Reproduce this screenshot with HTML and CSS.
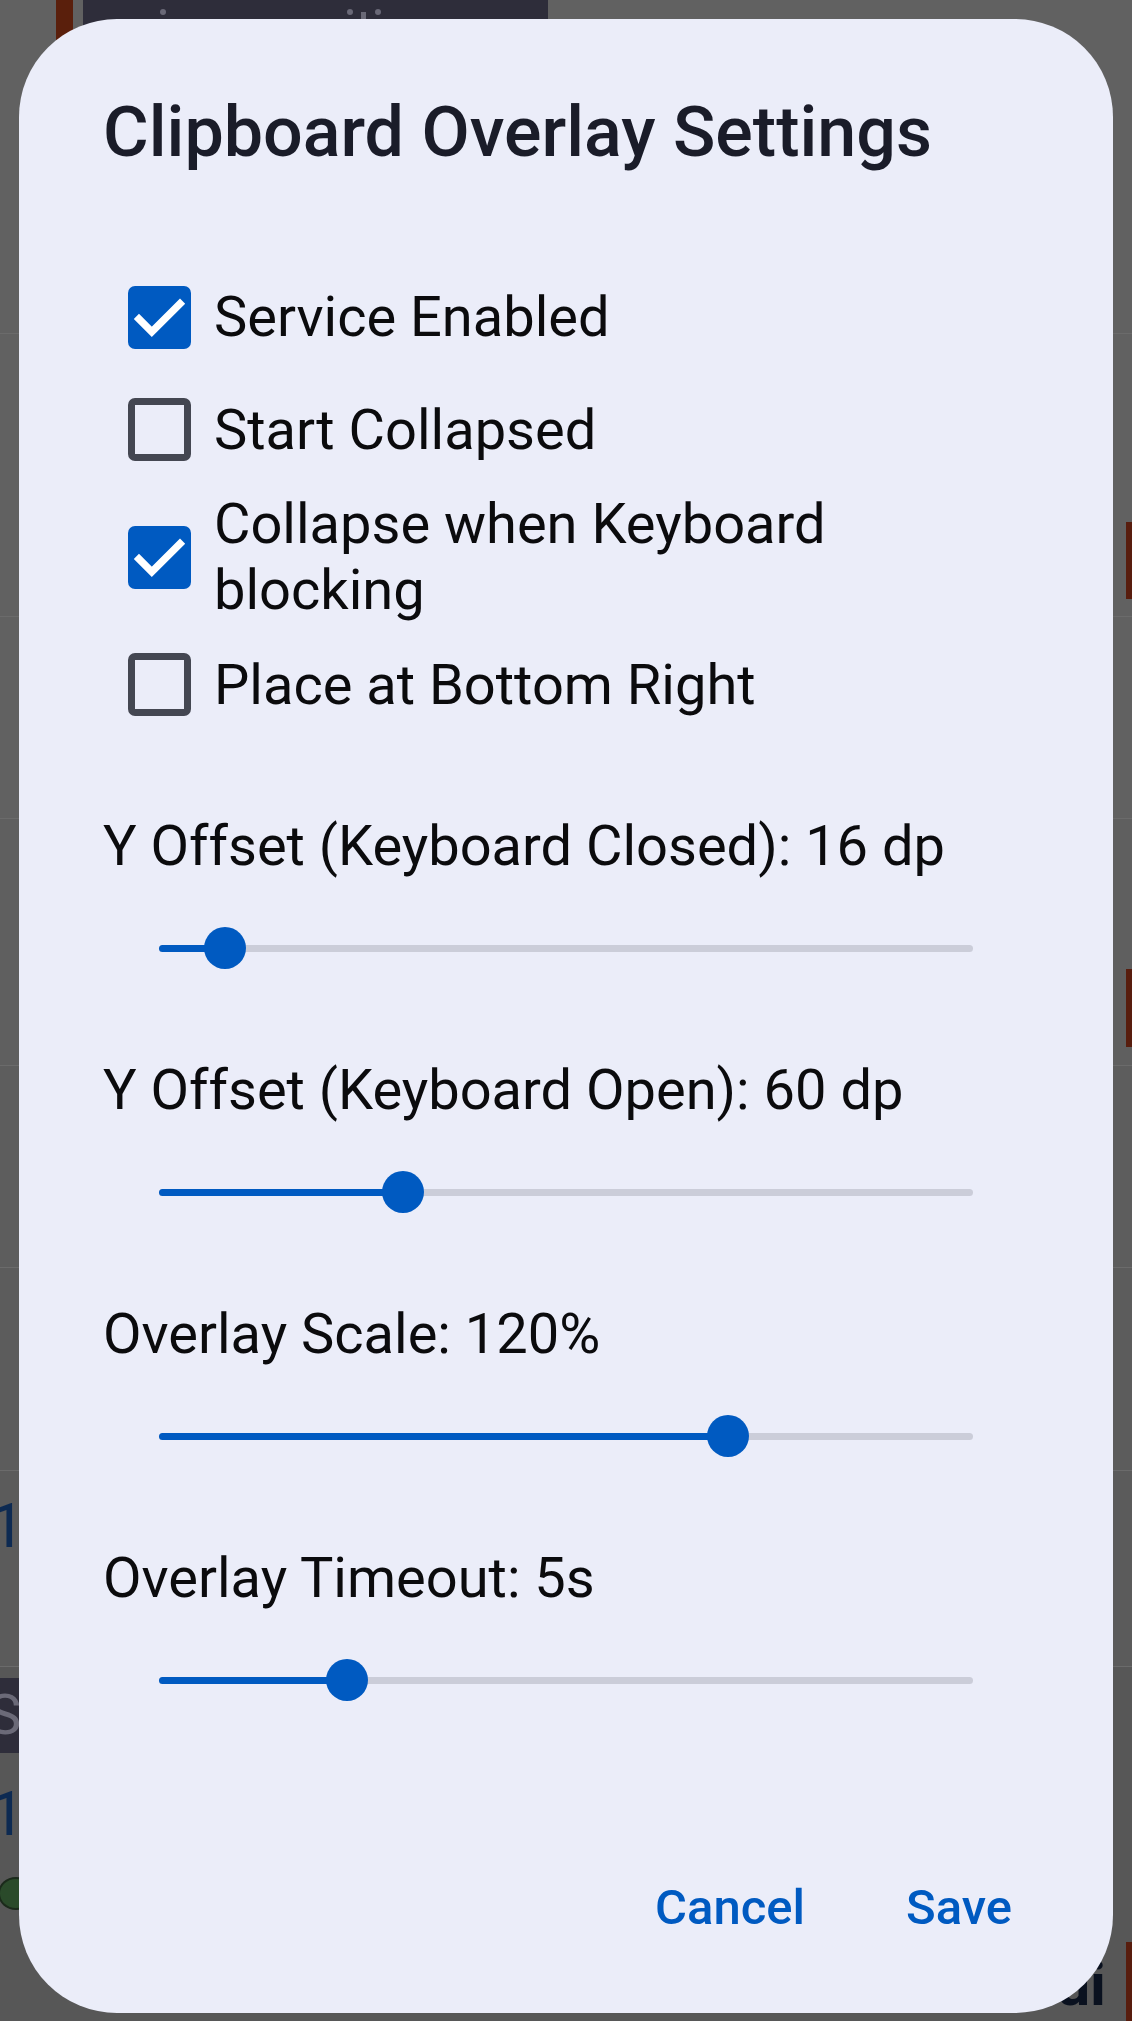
FILE: index.html
```html
<!DOCTYPE html>
<html lang="en">
<head>
<meta charset="utf-8">
<title>Clipboard Overlay Settings</title>
<link rel="stylesheet" href="styles.css">
</head>
<body>
<div class="app">
  <div class="row r1">
    <div class="accent"></div>
    <div class="topbox"><i class="dot d1"></i><i class="dot d2"></i><i class="tick"></i><i class="dot d3"></i></div>
  </div>
  <div class="row r2"><div class="redtag t2"></div></div>
  <div class="row r3"></div>
  <div class="row r4"><div class="redtag t4"></div></div>
  <div class="row r5"></div>
  <div class="row r6"></div>
  <div class="row r7"><span class="num">1</span></div>
  <div class="row r8">
    <div class="leftcol">
      <div class="sbox"><span>S</span></div>
      <span class="num n2">1</span>
      <span class="status"></span>
    </div>
    <div class="rightcol">
      <span class="ui">ui</span>
      <div class="redtag t8"></div>
    </div>
  </div>
</div>

<div class="dialog">
  <h1 class="title">Clipboard Overlay Settings</h1>

  <div class="checks">
    <div class="check-row">
      <span class="box on"><svg viewBox="0 0 18 18" width="63" height="63"><polyline points="2.4,8.7 6.8,13.1 15.6,4.3" fill="none" stroke="#ffffff" stroke-width="2.1"/></svg></span>
      <span class="check-text">Service Enabled</span>
    </div>
    <div class="check-row">
      <span class="box"></span>
      <span class="check-text">Start Collapsed</span>
    </div>
    <div class="check-row">
      <span class="box on"><svg viewBox="0 0 18 18" width="63" height="63"><polyline points="2.4,8.7 6.8,13.1 15.6,4.3" fill="none" stroke="#ffffff" stroke-width="2.1"/></svg></span>
      <span class="check-text">Collapse when Keyboard blocking</span>
    </div>
    <div class="check-row">
      <span class="box"></span>
      <span class="check-text">Place at Bottom Right</span>
    </div>
  </div>

  <div class="sliders">
    <div class="slider-block">
      <div class="slider-label">Y Offset (Keyboard Closed): 16 dp</div>
      <div class="slider"><div class="track"><div class="fill" style="width:66px"></div><div class="thumb" style="left:45px"></div></div></div>
    </div>
    <div class="slider-block">
      <div class="slider-label">Y Offset (Keyboard Open): 60 dp</div>
      <div class="slider"><div class="track"><div class="fill" style="width:244px"></div><div class="thumb" style="left:223px"></div></div></div>
    </div>
    <div class="slider-block">
      <div class="slider-label">Overlay Scale: 120%</div>
      <div class="slider"><div class="track"><div class="fill" style="width:569px"></div><div class="thumb" style="left:548px"></div></div></div>
    </div>
    <div class="slider-block">
      <div class="slider-label">Overlay Timeout: 5s</div>
      <div class="slider"><div class="track"><div class="fill" style="width:188px"></div><div class="thumb" style="left:167px"></div></div></div>
    </div>
  </div>

  <div class="spacer"></div>

  <div class="actions">
    <button class="text-btn" type="button">Cancel</button>
    <button class="text-btn" type="button">Save</button>
  </div>
</div>
</body>
</html>
```

FILE: styles.css
```css
* { box-sizing: border-box; }

html, body {
  margin: 0;
  padding: 0;
}

body {
  width: 1132px;
  height: 2021px;
  overflow: hidden;
  position: relative;
  background: #5b5b5b;
  font-family: Roboto, "Noto Sans", "Liberation Sans", sans-serif;
}

/* ---------- dimmed app behind the scrim ---------- */
.app {
  display: flex;
  flex-direction: column;
  width: 1132px;
  height: 2021px;
}

.row {
  display: flex;
  flex: none;
  border-bottom: 1px solid #6b6b6b;
  background: #616161;
}

.r1 { height: 334px; align-items: flex-start; }
.r2 { height: 283px; justify-content: flex-end; align-items: flex-start; }
.r3 { height: 202px; }
.r4 { height: 247px; justify-content: flex-end; align-items: flex-start; background: #5f5f5f; }
.r5 { height: 202px; background: #5d5d5d; }
.r6 { height: 203px; background: #5c5c5c; }
.r7 { height: 196px; background: #5b5b5b; align-items: flex-start; }
.r8 { flex: 1; border-bottom: 0; background: #575757; justify-content: space-between; align-items: stretch; }

.accent {
  width: 17px;
  height: 120px;
  margin-left: 56px;
  background: #5a1f0c;
}

.topbox {
  width: 465px;
  height: 40px;
  margin-left: 10px;
  background: #2e2d3a;
  display: flex;
  align-items: flex-start;
}

.dot {
  display: block;
  width: 6px;
  height: 6px;
  border-radius: 50%;
  background: #6a6977;
  margin-top: 9px;
}
.d1 { margin-left: 77px; }
.d2 { margin-left: 181px; }
.tick { display: block; width: 5px; height: 10px; margin-top: 12px; margin-left: 8px; background: #6a6977; }
.d3 { margin-left: 9px; }

.redtag {
  width: 6px;
  background: #581d0e;
}
.t2 { height: 77px; margin-top: 188px; }
.t4 { height: 78px; margin-top: 150px; }
.t8 { height: 79px; margin-top: 275px; }

.num {
  display: block;
  font-size: 62px;
  line-height: 1;
  color: #0d2a52;
  margin-left: -10px;
  margin-top: 24px;
}

.leftcol {
  display: flex;
  flex-direction: column;
  align-items: flex-start;
  padding-top: 11px;
}

.sbox {
  width: 40px;
  height: 75px;
  background: #2e2d3a;
  color: #6b6a78;
  font-size: 56px;
  line-height: 75px;
  overflow: hidden;
}
.sbox span { margin-left: -12px; }

.n2 { margin-top: 30px; margin-left: -10px; }

.status {
  display: block;
  width: 36px;
  height: 33px;
  border-radius: 50%;
  background: #2a4a2a;
  border: 2px solid #1b2a1b;
  margin-top: 32px;
  margin-left: -2px;
}

.rightcol {
  display: flex;
  align-items: flex-start;
}

.ui {
  font-size: 60px;
  font-weight: 700;
  line-height: 1;
  color: #0a111f;
  margin-top: 288px;
  margin-right: 20px;
}

/* ---------- dialog ---------- */
.dialog {
  position: absolute;
  top: 19px;
  left: 19px;
  width: 1094px;
  height: 1994px;
  border-radius: 98px;
  background: #ebedf9;
  display: flex;
  flex-direction: column;
  padding: 72px 84px 36px 84px;
}

.title {
  margin: 0;
  font-size: 70px;
  font-weight: 500;
  line-height: 82px;
  color: #1a1c29;
  letter-spacing: 0;
}

.checks {
  display: flex;
  flex-direction: column;
  gap: 10.5px;
  margin-top: 93px;
}

.check-row {
  display: flex;
  align-items: center;
  min-height: 102px;
  padding-left: 24.7px;
}

.box {
  flex: none;
  width: 63px;
  height: 63px;
  border-radius: 7px;
  border: 7px solid #444752;
  display: flex;
  align-items: center;
  justify-content: center;
  margin-right: 23.3px;
}

.box.on {
  border: 0;
  background: #005ac1;
}

.box svg { display: block; }

.check-text {
  font-size: 56px;
  line-height: normal;
  color: #0b0b0d;
}

.sliders {
  display: flex;
  flex-direction: column;
  gap: 40px;
  margin-top: 77.5px;
}

.slider-label {
  font-size: 56px;
  line-height: normal;
  color: #0b0b0d;
}

.slider {
  height: 138px;
  display: flex;
  align-items: center;
  padding: 0 56px;
}

.track {
  position: relative;
  flex: 1;
  height: 7px;
  border-radius: 4px;
  background: #cbcdd9;
}

.fill {
  height: 7px;
  border-radius: 4px;
  background: #005ac1;
}

.thumb {
  position: absolute;
  top: -17.5px;
  width: 42px;
  height: 42px;
  border-radius: 50%;
  background: #005ac1;
}

.spacer { flex: 1; }

.actions {
  display: flex;
  justify-content: flex-end;
  gap: 17px;
  margin-right: -25px;
}

.text-btn {
  height: 140px;
  padding: 0 42px;
  border: 0;
  background: transparent;
  font-family: Roboto, "Noto Sans", "Liberation Sans", sans-serif;
  font-size: 49px;
  font-weight: 500;
  color: #005ac1;
  letter-spacing: 0;
  line-height: normal;
  cursor: pointer;
}
```
